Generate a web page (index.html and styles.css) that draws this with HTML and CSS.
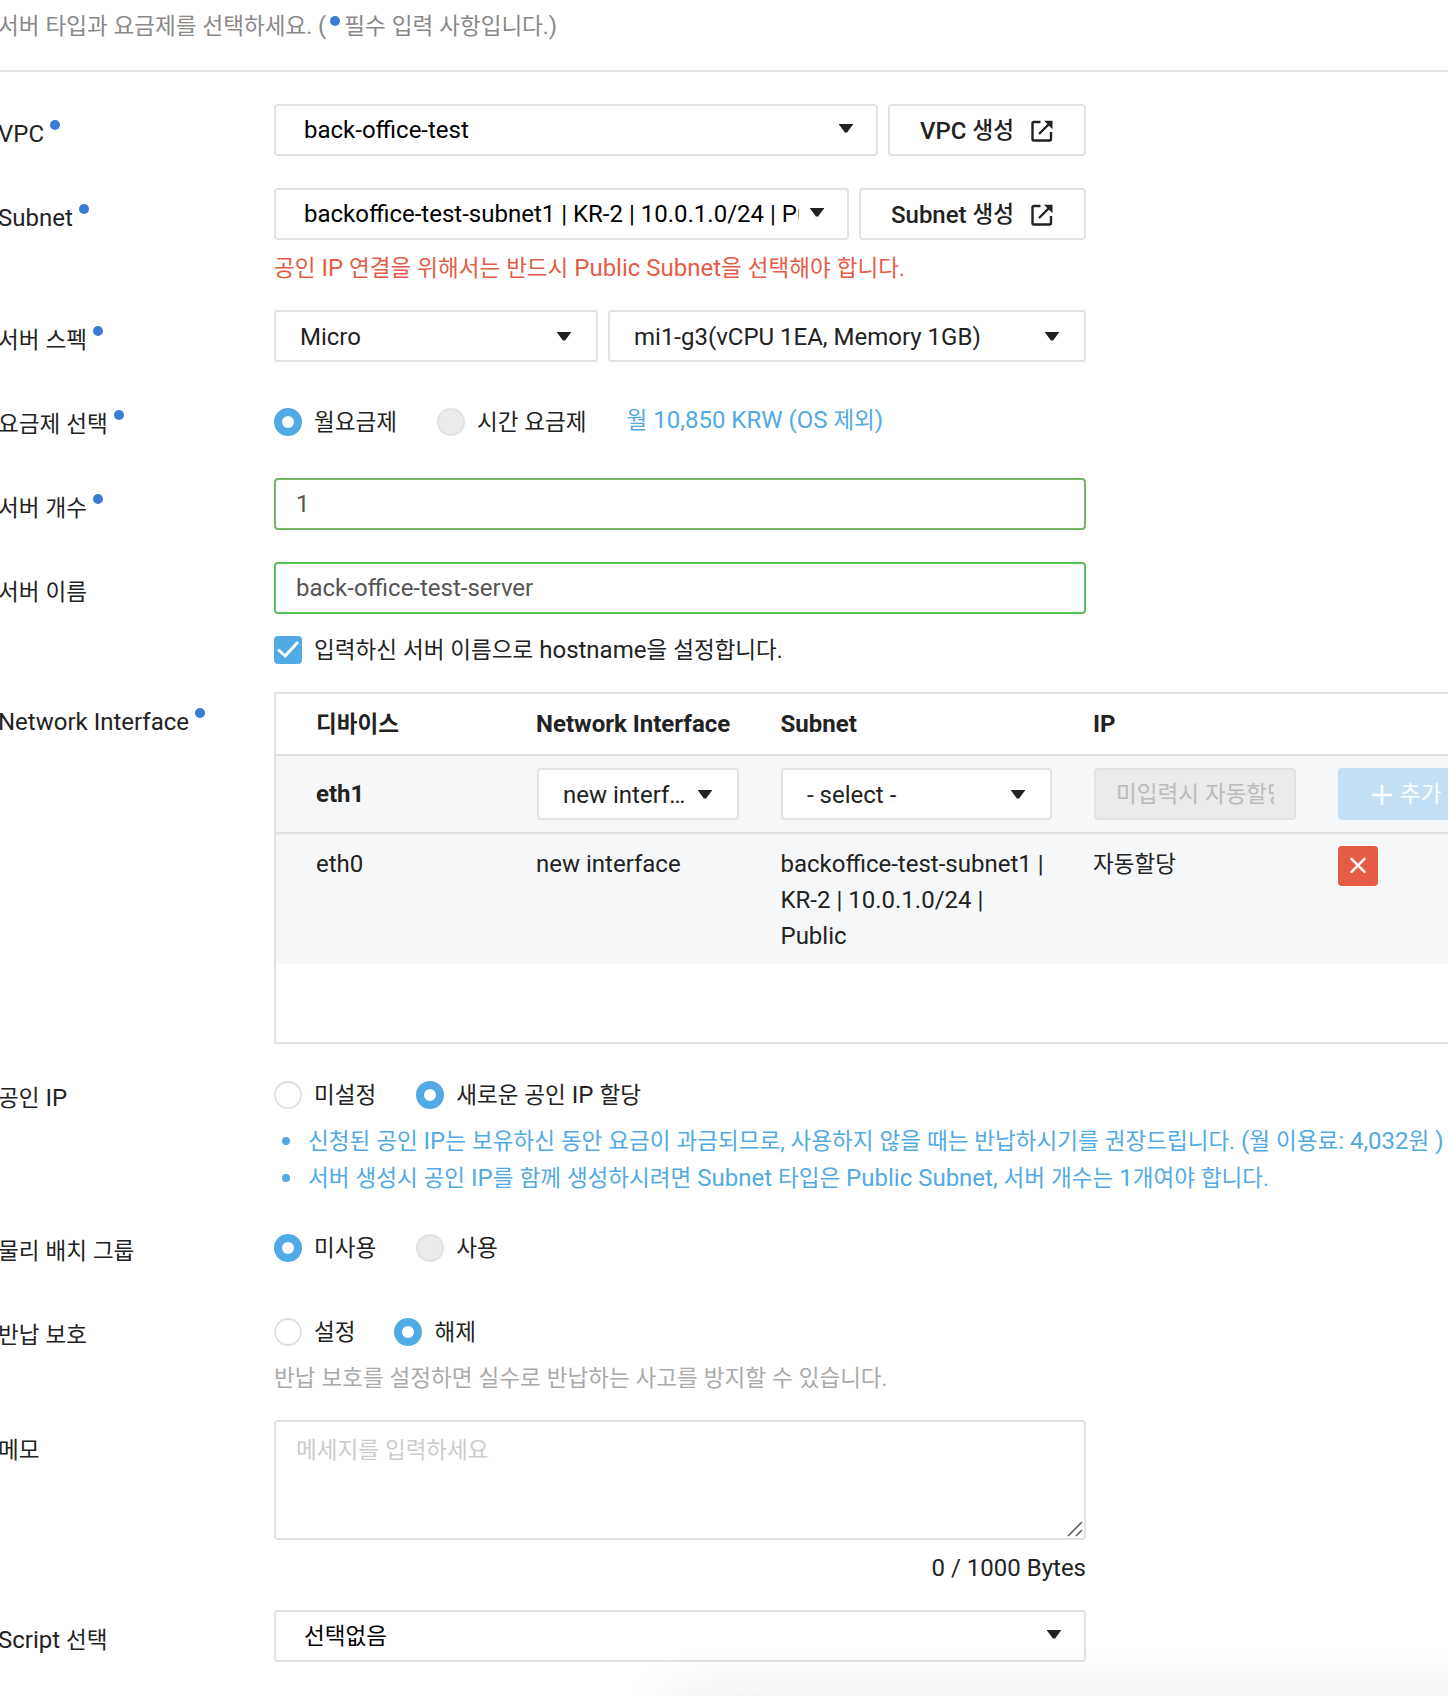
FILE: index.html
```html
<!DOCTYPE html>
<html lang="ko">
<head>
<meta charset="utf-8">
<title>서버 설정</title>
<link rel="stylesheet" href="styles.css">
</head>
<body>
<main class="page">
  <p class="intro"><span class="ko">서버 타입과 요금제를 선택하세요.</span> (<i class="dot"></i><span class="ko">필수 입력 사항입니다.</span>)</p>

  <form class="form">
    <div class="row">
      <div class="label">VPC<i class="dot"></i></div>
      <div class="line">
        <div class="box select native grow"><span class="value">back-office-test</span><i class="arrow"></i></div>
        <div class="box button vpc-button">VPC <span class="ko">생성</span>
          <svg class="ext" viewBox="0 0 22 22"><path d="M9.500 2H3Q1.500 2 1.500 3.500V19Q1.500 20.500 3 20.500H18.500Q20 20.500 20 19V12M19.500 2.500 8 14"/><path class="tip" d="M13 .7h8.500v8.500z"/></svg></div>
      </div>
    </div>

    <div class="row">
      <div class="label">Subnet<i class="dot"></i></div>
      <div>
        <div class="line">
          <div class="box select native grow"><span class="value">backoffice-test-subnet1 | KR-2 | 10.0.1.0/24 | Public</span><i class="arrow"></i></div>
          <div class="box button subnet-button">Subnet <span class="ko">생성</span>
            <svg class="ext" viewBox="0 0 22 22"><path d="M9.500 2H3Q1.500 2 1.500 3.500V19Q1.500 20.500 3 20.500H18.500Q20 20.500 20 19V12M19.500 2.500 8 14"/><path class="tip" d="M13 .7h8.500v8.500z"/></svg></div>
        </div>
        <p class="note error"><span class="ko">공인</span> IP <span class="ko">연결을 위해서는 반드시</span> Public Subnet<span class="ko">을 선택해야 합니다.</span></p>
      </div>
    </div>

    <div class="row">
      <div class="label"><span class="ko">서버 스펙</span><i class="dot"></i></div>
      <div class="line">
        <div class="box select custom spec-type"><span class="value">Micro</span><i class="arrow"></i></div>
        <div class="box select custom grow"><span class="value">mi1-g3(vCPU 1EA, Memory 1GB)</span><i class="arrow"></i></div>
      </div>
    </div>

    <div class="row">
      <div class="label"><span class="ko">요금제 선택</span><i class="dot"></i></div>
      <div class="options">
        <span class="option"><i class="radio on"></i><span class="ko">월요금제</span></span>
        <span class="option"><i class="radio off"></i><span class="ko">시간 요금제</span></span>
        <span class="price"><span class="ko">월</span> 10,850 KRW (OS <span class="ko">제외</span>)</span>
      </div>
    </div>

    <div class="row">
      <div class="label"><span class="ko">서버 개수</span><i class="dot"></i></div>
      <div class="line"><div class="box input count">1</div></div>
    </div>

    <div class="row">
      <div class="label"><span class="ko">서버 이름</span></div>
      <div>
        <div class="line"><div class="box input name">back-office-test-server</div></div>
        <div class="check-line">
          <svg class="check" viewBox="0 0 28 28"><rect width="28" height="28" rx="4"/><path d="m4 13.500 7.200 6.500L24 6"/></svg>
          <span><span class="ko">입력하신 서버 이름으로</span> hostname<span class="ko">을 설정합니다.</span></span>
        </div>
      </div>
    </div>

    <div class="row network">
      <div class="label">Network Interface<i class="dot"></i></div>
      <div class="table">
        <div class="tr head"><span class="ko">디바이스</span><span>Network Interface</span><span>Subnet</span><span>IP</span></div>
        <div class="tr edit">
          <b>eth1</b>
          <div class="box select custom nic"><span class="value">new interf…</span><i class="arrow"></i></div>
          <div class="box select custom sub"><span class="value">- select -</span><i class="arrow"></i></div>
          <div class="box ip"><span class="value ko">미입력시 자동할당</span></div>
          <div class="add"><svg viewBox="0 0 22 22"><path d="M11 1v20M1 11h20"/></svg><span class="ko">추가</span></div>
        </div>
        <div class="tr data">
          <span>eth0</span><span>new interface</span>
          <span>backoffice-test-subnet1 |<br>KR-2 | 10.0.1.0/24 |<br>Public</span>
          <span class="ko">자동할당</span>
          <svg class="remove" viewBox="0 0 40 40"><rect width="40" height="40" rx="4"/><path d="m13.500 12.900 13 13m0-13-13 13"/></svg>
        </div>
      </div>
    </div>

    <div class="row lower">
      <div class="label"><span class="ko">공인</span> IP</div>
      <div>
        <div class="options">
          <span class="option"><i class="radio"></i><span class="ko">미설정</span></span>
          <span class="option"><i class="radio on"></i><span><span class="ko">새로운 공인</span> IP <span class="ko">할당</span></span></span>
        </div>
        <ul class="tips">
          <li><span class="ko">신청된 공인</span> IP<span class="ko">는 보유하신 동안 요금이 과금되므로, 사용하지 않을 때는 반납하시기를 권장드립니다.</span> (<span class="ko">월 이용료</span>: 4,032<span class="ko">원</span> )</li>
          <li><span class="ko">서버 생성시 공인</span> IP<span class="ko">를 함께 생성하시려면</span> Subnet <span class="ko">타입은</span> Public Subnet, <span class="ko">서버 개수는</span> 1<span class="ko">개여야 합니다.</span></li>
        </ul>
      </div>
    </div>

    <div class="row lower">
      <div class="label"><span class="ko">물리 배치 그룹</span></div>
      <div class="options">
        <span class="option"><i class="radio on"></i><span class="ko">미사용</span></span>
        <span class="option"><i class="radio off"></i><span class="ko">사용</span></span>
      </div>
    </div>

    <div class="row lower">
      <div class="label"><span class="ko">반납 보호</span></div>
      <div>
        <div class="options protect">
          <span class="option"><i class="radio"></i><span class="ko">설정</span></span>
          <span class="option"><i class="radio on"></i><span class="ko">해제</span></span>
        </div>
        <p class="note hint"><span class="ko">반납 보호를 설정하면 실수로 반납하는 사고를 방지할 수 있습니다.</span></p>
      </div>
    </div>

    <div class="row">
      <div class="label"><span class="ko">메모</span></div>
      <div class="memo">
        <div class="box area"><span class="ko">메세지를 입력하세요</span>
          <svg class="grip" viewBox="0 0 16 16"><path d="M1 15 15 1M9 15l6-6"/></svg></div>
        <p class="note counter">0 / 1000 Bytes</p>
      </div>
    </div>

    <div class="row">
      <div class="label">Script <span class="ko">선택</span></div>
      <div class="line"><div class="box select native grow"><span class="value ko">선택없음</span><i class="arrow"></i></div></div>
    </div>
  </form>
  <div class="dock"></div>
</main>
</body>
</html>
```
FILE: styles.css
```css
* { box-sizing: border-box; }

body {
  margin: 0;
  background: #fff;
  color: #222;
  font: 24px/36px Roboto, "Noto Sans CJK KR", sans-serif;
}

p, ul { margin: 0; padding: 0; }

.page {
  position: relative;
  height: 1696px;
  overflow: hidden;
}

/* Hangul is set slightly smaller than the Latin text beside it */
.ko {
  font-size: 22.54px;
  line-height: 0;
  word-spacing: 0.4px;
}

.dot {
  display: inline-block;
  width: 10px;
  height: 10px;
  margin-left: 6px;
  border-radius: 50%;
  background: #3a7bd5;
  vertical-align: 12px;
}

.intro {
  height: 72px;
  padding-top: 8px;
  border-bottom: 2px solid #e2e2e2;
  color: #888;
  text-indent: -2px;
  white-space: nowrap;
}
.intro .dot { margin: 0 4px; vertical-align: 8px; }

.form {
  display: flex;
  flex-direction: column;
  gap: 32px;
  padding-top: 32px;
}

.row {
  display: grid;
  grid-template-columns: 276px 1fr;
  margin-left: -2px;
  white-space: nowrap;
}
.label { height: 52px; padding-top: 12px; }
.lower .label { padding-top: 13px; }

.line { display: flex; gap: 10px; width: 812px; }
.grow { flex: 1; min-width: 0; }

.box {
  height: 52px;
  border: 2px solid #e2e2e2;
  border-radius: 4px;
  background: #fff;
}

.select { display: flex; align-items: center; justify-content: space-between; }
.value { flex: 1; min-width: 0; overflow: hidden; line-height: 36px; }
.value.ko { line-height: 37px; }
.arrow {
  width: 14px;
  height: 9px;
  background: #222;
  clip-path: polygon(0 0, 100% 0, 100% 12%, 58% 100%, 42% 100%, 0 12%);
}
.native { padding: 0 23px 0 28px; color: #000; }
.native .value { margin-right: 11px; }
.native .arrow { margin-top: -4px; }
.custom { padding: 2px 25px 0 24px; }
.custom .arrow { margin-top: -2px; }
.spec-type { width: 324px; }

.button {
  display: flex;
  align-items: center;
  gap: 6px;
  padding: 2px 0 0 30px;
  font-weight: 500;
}
.vpc-button { width: 198px; }
.subnet-button { width: 227px; }
.ext { width: 22px; height: 22px; margin: 0 0 1px 11px; fill: none; stroke: #222; stroke-width: 2.4; }
.ext .tip { fill: #222; stroke: none; }

.note { height: 28px; margin-top: 10px; }
.error { color: #e55b45; }
.hint { margin-top: 4px; height: 28px; color: #aaa; }
.counter { text-align: right; }

.input { flex: 1; padding: 6px 20px; color: #555; }
.count { border-color: #74b566; }
.name { border-color: #55c255; }

.options { display: flex; gap: 40px; height: 52px; padding-top: 10px; }
.protect { gap: 39px; }
.option { display: flex; gap: 12px; }
.radio {
  width: 28px;
  height: 28px;
  margin-top: 4px;
  border: 2px solid #e2e2e2;
  border-radius: 50%;
}
.radio.on { border: 8px solid #51aae4; }
.radio.off { background: #ebebeb; }
.option .ko { line-height: 38px; }
.option span .ko { line-height: 0; }
.price { margin-top: -2px; color: #51aae4; }

.check-line { display: flex; gap: 12px; height: 46px; padding-top: 18px; }
.check { width: 28px; height: 28px; margin-top: 4px; fill: #51aae4; }
.check path { fill: none; stroke: #fff; stroke-width: 3; }

.network { margin-bottom: -9px; }
.table { height: 352px; border: 2px solid #e0e0e0; border-right: 0; }
.tr {
  display: grid;
  grid-template-columns: 220px 244.5px 312.5px 245px 160px;
  padding-left: 40px;
}
.tr > .ko { line-height: 37px; }
.head { height: 62px; padding-top: 12px; border-bottom: 2px solid #e0e0e0; font-weight: 700; }
.edit { height: 78px; padding-top: 12px; border-bottom: 2px solid #e0e0e0; background: #f6f7f9; }
.edit b { padding-top: 8px; }
.nic { width: 202px; margin-left: 1px; }
.sub { width: 271px; margin-left: 0.5px; }
.ip { display: flex; align-items: center; width: 202px; margin-left: 1px; padding: 0 20px; background: #ebebeb; color: #bbb; }
.add { display: flex; align-items: center; gap: 7px; height: 52px; padding: 1px 0 0 33px; border-radius: 4px; background: #c5e0f4; color: #fbfcfd; }
.add svg { width: 22px; height: 22px; fill: none; stroke: #fbfcfd; stroke-width: 2.6; }
.data { height: 130px; padding-top: 12px; background: #f6f7f9; box-shadow: inset 0 1px #eeeff1; }
.remove { width: 40px; height: 40px; fill: #e55b45; }
.remove path { fill: none; stroke: #fff; stroke-width: 2.5; stroke-linecap: round; }

.tips { height: 69px; padding-top: 4px; list-style: none; color: #51aae4; }
.tips li { line-height: 37px; }
.tips li::before {
  content: "";
  display: inline-block;
  width: 8px;
  height: 8px;
  margin: 0 18px 0 8px;
  border-radius: 50%;
  background: #51aae4;
  vertical-align: 4px;
}

.memo { width: 812px; }
.area { display: flex; justify-content: space-between; height: 120px; padding: 10px 1px 1px 20px; color: #ccc; }
.area .ko { line-height: 38px; }
.grip { align-self: flex-end; width: 16px; height: 16px; fill: none; stroke: #555; stroke-width: 1.5; }

/* Floating panel just below the visible area; only its shadow shows */
.dock {
  position: absolute;
  top: 1712px;
  left: 680px;
  width: 1100px;
  height: 100px;
  box-shadow: 0 0 70px rgba(0, 0, 0, 0.14);
}
```
